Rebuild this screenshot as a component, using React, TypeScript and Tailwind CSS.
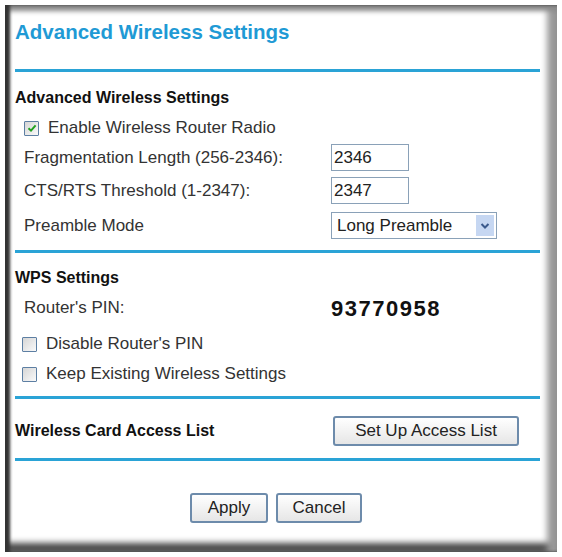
const font = { fontFamily: '"Liberation Sans", Arial, sans-serif' };

const Divider = () => <div className="h-[3px] bg-[#2aa3d6] w-full" />;

const Check = ({ checked }: { checked?: boolean }) => (
  <span className="inline-flex w-[15px] h-[15px] border border-[#5d7fa3] rounded-[1px] bg-gradient-to-br from-[#d6d6d6] to-[#fafafa] items-center justify-center">
    {checked && (
      <svg viewBox="0 0 10 10" className="w-[10px] h-[10px]">
        <path d="M1.5 5.2 L4 7.6 L8.6 2.4" fill="none" stroke="#21a121" strokeWidth="2" />
      </svg>
    )}
  </span>
);

const Btn = ({ children, className = "" }: { children: React.ReactNode; className?: string }) => (
  <button
    className={`h-[30px] border-2 border-[#6d8bab] rounded-[3px] bg-gradient-to-b from-[#ffffff] to-[#e6e6e6] text-[#222] text-[17px] ${className}`}
  >
    {children}
  </button>
);

export default function App() {
  return (
    <div className="w-[562px] h-[557px] bg-white p-[5px]" style={font}>
      <div className="w-full h-full shadow-[inset_5px_0_3px_#333,inset_0_6px_5px_#8a8a8a,inset_-10px_0_6px_#9a9a9a,inset_0_-9px_6px_#444] pl-[10px] pr-[17px] pt-[12px]">
        <div className="text-[20.5px] font-bold text-[#1f9ad5] h-[30px] leading-[30px]">Advanced Wireless Settings</div>
        <div className="mt-[22px]">
          <Divider />
        </div>

        <div className="text-[16px] font-bold text-[#111] mt-[16px] h-[20px] leading-[20px]">Advanced Wireless Settings</div>
        <div className="flex items-center gap-[9px] pl-[9px] mt-[10px] h-[20px] text-[17px] text-[#333]">
          <Check checked />
          <span>Enable Wireless Router Radio</span>
        </div>
        <div className="flex items-center pl-[9px] mt-[6px] h-[27px] text-[17px] text-[#333]">
          <span className="w-[307px]">Fragmentation Length (256-2346):</span>
          <div className="w-[78px] h-[27px] border border-[#8aa1b8] px-[2px] leading-[25px] text-[#222]">2346</div>
        </div>
        <div className="flex items-center pl-[9px] mt-[6px] h-[27px] text-[17px] text-[#333]">
          <span className="w-[307px]">CTS/RTS Threshold (1-2347):</span>
          <div className="w-[78px] h-[27px] border border-[#8aa1b8] px-[2px] leading-[25px] text-[#222]">2347</div>
        </div>
        <div className="flex items-center pl-[9px] mt-[8px] h-[27px] text-[17px] text-[#333]">
          <span className="w-[307px]">Preamble Mode</span>
          <div className="w-[166px] h-[27px] border border-[#8aa1b8] flex items-center justify-between pl-[5px] pr-[2px] text-[#222]">
            <span>Long Preamble</span>
            <span className="w-[18px] h-[21px] bg-[#c6d7f2] flex items-center justify-center">
              <svg viewBox="0 0 10 10" className="w-[10px] h-[10px]">
                <path d="M1.5 3 L5 6.5 L8.5 3" fill="none" stroke="#3b5a8c" strokeWidth="2" />
              </svg>
            </span>
          </div>
        </div>
        <div className="mt-[11px]">
          <Divider />
        </div>

        <div className="text-[16px] font-bold text-[#111] mt-[15px] h-[20px] leading-[20px]">WPS Settings</div>
        <div className="flex items-center pl-[9px] mt-[9px] h-[22px] text-[17px] text-[#333]">
          <span className="w-[307px]">Router's PIN:</span>
          <span className="text-[22px] font-bold text-[#111] tracking-[1.5px]">93770958</span>
        </div>
        <div className="flex items-center gap-[9px] pl-[7px] mt-[15px] h-[20px] text-[17px] text-[#333]">
          <Check />
          <span>Disable Router's PIN</span>
        </div>
        <div className="flex items-center gap-[9px] pl-[7px] mt-[10px] h-[20px] text-[17px] text-[#333]">
          <Check />
          <span>Keep Existing Wireless Settings</span>
        </div>
        <div className="mt-[12px]">
          <Divider />
        </div>

        <div className="flex items-center mt-[16px] h-[31px]">
          <span className="w-[318px] text-[16px] font-bold text-[#111]">Wireless Card Access List</span>
          <Btn className="w-[186px]">Set Up Access List</Btn>
        </div>
        <div className="mt-[12px]">
          <Divider />
        </div>

        <div className="flex justify-center gap-[8px] mt-[32px] pr-[3px]">
          <Btn className="w-[78px]">Apply</Btn>
          <Btn className="w-[86px]">Cancel</Btn>
        </div>
      </div>
    </div>
  );
}
